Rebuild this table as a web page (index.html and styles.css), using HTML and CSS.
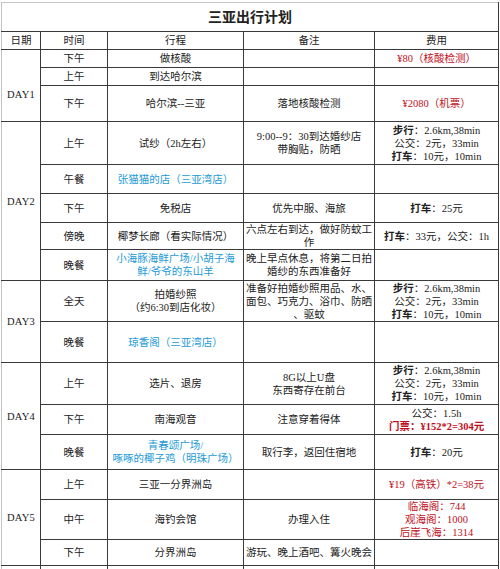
FILE: index.html
```html
<!DOCTYPE html>
<html lang="zh-CN">
<head>
<meta charset="utf-8">
<title>三亚出行计划</title>
<link rel="stylesheet" href="styles.css">
</head>
<body>
<div class="sheet">
<table class="plan">
<colgroup><col class="c-date"><col class="c-time"><col class="c-route"><col class="c-note"><col class="c-cost"></colgroup>
<tr class="h29"><td colspan="5" class="title">三亚出行计划</td></tr>
<tr class="h18"><th class="first">日期</th><th>时间</th><th>行程</th><th>备注</th><th>费用</th></tr>

<tr class="h18"><td rowspan="3" class="day day1 first">DAY1</td><td>下午</td><td>做核酸</td><td></td><td class="red">¥80（核酸检测）</td></tr>
<tr class="h18"><td>上午</td><td>到达哈尔滨</td><td></td><td></td></tr>
<tr class="h36"><td>下午</td><td>哈尔滨--三亚</td><td>落地核酸检测</td><td class="red">¥2080（机票）</td></tr>

<tr class="h43"><td rowspan="5" class="day first">DAY2</td><td>上午</td><td>试纱（2h左右）</td><td>9:00--9：30到达婚纱店<br>带胸贴，防晒</td><td><b>步行</b>：2.6km,38min<br>公交：2元，33min<br><b>打车</b>：10元，10min</td></tr>
<tr class="h29"><td>午餐</td><td class="blue">张猫猫的店（三亚湾店）</td><td></td><td></td></tr>
<tr class="h29"><td>下午</td><td>免税店</td><td>优先中服、海旅</td><td><b>打车</b>：25元</td></tr>
<tr class="h27"><td>傍晚</td><td>椰梦长廊（看实际情况）</td><td>六点左右到达，做好防蚊工<br>作</td><td><b>打车</b>：33元，公交：1h</td></tr>
<tr class="h31"><td>晚餐</td><td class="blue">小海豚海鲜广场/小胡子海<br>鲜/爷爷的东山羊</td><td>晚上早点休息，将第二日拍<br>婚纱的东西准备好</td><td></td></tr>

<tr class="h41"><td rowspan="2" class="day first">DAY3</td><td>全天</td><td>拍婚纱照<br>（约6:30到店化妆）</td><td>准备好拍婚纱照用品、水、<br>面包、巧克力、浴巾、防晒<br>、驱蚊</td><td><b>步行</b>：2.6km,38min<br>公交：2元，33min<br><b>打车</b>：10元，10min</td></tr>
<tr class="h41"><td>晚餐</td><td class="blue">琼香阁（三亚湾店）</td><td></td><td></td></tr>

<tr class="h42"><td rowspan="3" class="day first">DAY4</td><td>上午</td><td>选片、退房</td><td>8G以上U盘<br>东西寄存在前台</td><td><b>步行</b>：2.6km,38min<br>公交：2元，33min<br><b>打车</b>：10元，10min</td></tr>
<tr class="h30"><td>下午</td><td>南海观音</td><td>注意穿着得体</td><td>公交：1.5h<br><span class="red">门票：¥152*2=304元</span></td></tr>
<tr class="h35"><td>晚餐</td><td class="blue">青春颂广场/<br>啄啄的椰子鸡（明珠广场）</td><td>取行李，返回住宿地</td><td><b>打车</b>：20元</td></tr>

<tr class="h30"><td rowspan="3" class="day first">DAY5</td><td>上午</td><td>三亚一分界洲岛</td><td></td><td class="red">¥19（高铁）*2=38元</td></tr>
<tr class="h40"><td>中午</td><td>海钓会馆</td><td>办理入住</td><td class="red">临海阁：744<br>观海阁：1000<br>后崖飞海：1314</td></tr>
<tr class="h26"><td>下午</td><td>分界洲岛</td><td>游玩、晚上酒吧、篝火晚会</td><td></td></tr>
<tr class="h26"><td class="first"></td><td></td><td></td><td></td><td></td></tr>
</table>
</div>
</body>
</html>
```

FILE: styles.css
```css
html, body {
  margin: 0;
  padding: 0;
  background: #ffffff;
}

body {
  font-family: "Liberation Serif", "Noto Sans CJK SC", serif;
  font-size: 10.5px;
  color: #222222;
}

.sheet {
  padding: 2px 0 0 1px;
  height: 569px;
  overflow: hidden;
  box-sizing: border-box;
}

.plan {
  border-collapse: collapse;
  table-layout: fixed;
  width: 497px;
}

.c-date { width: 39px; }
.c-time { width: 67px; }
.c-route { width: 136px; }
.c-note { width: 131px; }
.c-cost { width: 124px; }

.plan td,
.plan th {
  border: 1px solid #3a3a3a;
  padding: 0 1px;
  text-align: center;
  vertical-align: middle;
  line-height: 13px;
  font-weight: normal;
  overflow: hidden;
  white-space: nowrap;
}

.plan .first {
  border-left-color: #c4c4c4;
}

.plan .title {
  font-size: 14px;
  font-weight: bold;
  color: #222;
  border-top-color: #c4c4c4;
  border-left-color: #c4c4c4;
}

.day {
  letter-spacing: 0.2px;
}

.plan .day1 {
  padding-top: 17px;
}

.blue {
  color: #1d9ad6;
  font-weight: bold;
}

.red {
  color: #c0101c;
  font-weight: bold;
}

b {
  font-weight: bold;
}

.h18 { height: 18px; }
.h26 { height: 26px; }
.h27 { height: 27px; }
.h29 { height: 29px; }
.h30 { height: 30px; }
.h31 { height: 31px; }
.h35 { height: 35px; }
.h36 { height: 36px; }
.h40 { height: 40px; }
.h41 { height: 41px; }
.h42 { height: 42px; }
.h43 { height: 43px; }
```
